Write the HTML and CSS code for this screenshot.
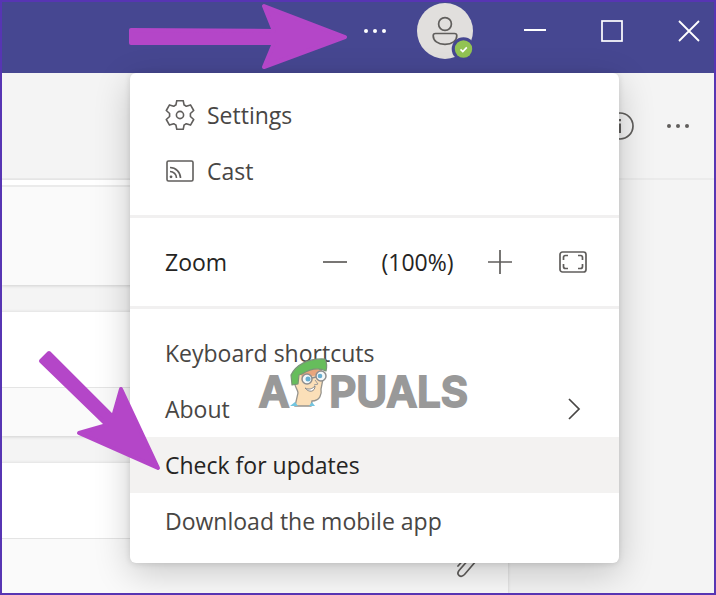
FILE: index.html
```
<!DOCTYPE html>
<html lang="en">

<head>
    <meta charset="UTF-8">
    <meta name="viewport" content="width=device-width, initial-scale=1.0">
    <title>Teams menu</title>
    <link rel="stylesheet" href="styles.css">
</head>

<body>

    <div class="app">

        <header class="titlebar">
            <button class="bar-btn" aria-label="Settings and more">
                <svg width="24" height="24" viewBox="0 0 24 24" fill="#fff">
                    <circle cx="3" cy="12" r="2" />
                    <circle cx="12" cy="12" r="2" />
                    <circle cx="21" cy="12" r="2" />
                </svg>
            </button>
            <button class="avatar" aria-label="Account">
                <svg width="60" height="60" viewBox="0 0 60 60" fill="none">
                    <circle cx="28" cy="28" r="28" fill="#e1dfdd" />
                    <g stroke="#605e5c" stroke-width="1.7">
                        <circle cx="28" cy="21" r="6.4" />
                        <path d="M18.500 30.500h19a2.300 2.300 0 0 1 2.300 2.300c0 5-4.500 8.500-11.800 8.500s-11.800-3.500-11.800-8.500a2.300 2.300 0 0 1 2.300-2.300z" />
                    </g>
                    <circle cx="46.500" cy="46" r="11.800" fill="#464791" />
                    <circle cx="46.500" cy="46" r="8.700" fill="#92c353" />
                    <path d="M43.500 46.300l2.300 2.200 4-4.200" stroke="#fff" stroke-width="1.700" />
                </svg>
            </button>
            <button class="bar-btn" aria-label="Minimize">
                <svg width="24" height="24" viewBox="0 0 24 24" stroke="#fff" stroke-width="2">
                    <path d="M1 11h22" />
                </svg>
            </button>
            <button class="bar-btn" aria-label="Maximize">
                <svg width="24" height="24" viewBox="0 0 24 24" stroke="#fff" stroke-width="1.7" fill="none">
                    <rect x="2" y="2" width="20" height="20" />
                </svg>
            </button>
            <button class="bar-btn" aria-label="Close">
                <svg width="24" height="24" viewBox="0 0 24 24" stroke="#fff" stroke-width="1.8">
                    <path d="M2 2l20 20M22 2L2 22" />
                </svg>
            </button>

            <nav class="menu">
                <div class="group">
                    <button class="item">
                        <svg class="icon" width="30" height="30" viewBox="0 0 30 30" fill="none" stroke="#605e5c" stroke-width="1.600" stroke-linejoin="round">
                            <path d="M11.800 .6h6.400l.9 4.400q1.100.4 2.200 1.300l4.200-1.400 3.200 5.600-3.300 3v3l3.300 3-3.200 5.600-4.200-1.400q-1.100.9-2.200 1.300l-.9 4.400h-6.400l-.9-4.400q-1.100-.4-2.200-1.300l-4.200 1.400-3.200-5.600 3.300-3v-3l-3.300-3 3.200-5.600 4.200 1.400q1.100-.9 2.200-1.300z" />
                            <circle cx="15" cy="15" r="3.600" />
                        </svg>
                        <span>Settings</span>
                    </button>
                    <button class="item">
                        <svg class="icon" width="30" height="30" viewBox="0 0 30 30" fill="none" stroke="#605e5c" stroke-width="1.600">
                            <rect x="2" y="5" width="26" height="20" rx="1.500" />
                            <path d="M5 11.500a10.500 10.500 0 0 1 10.500 10.500M5 15.500a6.500 6.500 0 0 1 6.500 6.500" />
                            <circle cx="6" cy="20.800" r="1.400" fill="#605e5c" stroke="none" />
                        </svg>
                        <span>Cast</span>
                    </button>
                </div>

                <div class="group zoom">
                    <span class="zoom-label">Zoom</span>
                    <button class="zoom-btn" aria-label="Zoom out">
                        <svg width="26" height="26" viewBox="0 0 26 26" stroke="#605e5c" stroke-width="1.700">
                            <path d="M1 13h24" />
                        </svg>
                    </button>
                    <span class="zoom-value">(100%)</span>
                    <button class="zoom-btn" aria-label="Zoom in">
                        <svg width="26" height="26" viewBox="0 0 26 26" stroke="#605e5c" stroke-width="1.700">
                            <path d="M1 13h24M13 1v24" />
                        </svg>
                    </button>
                    <button class="zoom-btn full" aria-label="Full screen">
                        <svg width="30" height="26" viewBox="0 0 30 26" fill="none" stroke="#605e5c" stroke-width="1.700">
                            <rect x="2" y="3" width="26" height="20" rx="2.500" />
                            <path d="M5.500 11v-2.500a2 2 0 0 1 2-2h2.500M20 6.500h2.500a2 2 0 0 1 2 2v2.500M24.500 15v2.500a2 2 0 0 1-2 2H20M10 19.500H7.500a2 2 0 0 1-2-2v-2.500" />
                        </svg>
                    </button>
                </div>

                <div class="group links">
                    <button class="item">Keyboard shortcuts</button>
                    <button class="item">
                        <span>About</span>
                        <svg class="chevron" width="14" height="24" viewBox="0 0 14 24" fill="none" stroke="#484644" stroke-width="1.700">
                            <path d="M2 2l10 10L2 22" />
                        </svg>
                    </button>
                    <button class="item active">Check for updates</button>
                    <button class="item">Download the mobile app</button>
                </div>
            </nav>
        </header>

        <div class="channel-bar">
            <button class="info" aria-label="Info">
                <svg width="28" height="28" viewBox="0 0 28 28" fill="none" stroke="#605e5c" stroke-width="1.700">
                    <circle cx="14" cy="14" r="13" />
                    <path d="M14 11.500v9.500M14 7v2.200" stroke-width="2" />
                </svg>
            </button>
            <button class="more" aria-label="More options">
                <svg width="24" height="24" viewBox="0 0 24 24" fill="#605e5c">
                    <circle cx="3" cy="12" r="2" />
                    <circle cx="12" cy="12" r="2" />
                    <circle cx="21" cy="12" r="2" />
                </svg>
            </button>
        </div>

        <main class="posts">
            <div class="post first">
                <div class="post-text"></div>
                <div class="reply"></div>
            </div>
            <div class="post">
                <div class="post-text"></div>
                <div class="reply"></div>
            </div>
            <div class="post last">
                <div class="post-text"></div>
                <div class="reply">
                    <svg width="26" height="30" viewBox="0 0 26 30" fill="none" stroke="#605e5c" stroke-width="1.700" stroke-linecap="round">
                        <path d="M2 15L12 4c5-5 12 0 8 6L8.500 23.500c-4 4-8.500 0-5.500-4L14 7" />
                    </svg>
                </div>
            </div>
        </main>

        <!-- watermark -->
        <div class="watermark">
            <span>A</span>
            <svg width="40" height="50" viewBox="0 0 40 50">
                <path d="M6 22c-2 7 3 10 3 14l-3 13h16l1-5c8 0 10-7 9-12l3-15-7-8-18 4z" fill="#fbdfb8" stroke="#96948e" stroke-width="1.300" />
                <path d="M12 17l12-7 9 4-1 4-9 1-9 5z" fill="#e9a57c" />
                <path d="M1 49l5-4 3 4zM20 49l3-4 3 4z" fill="#72c5e0" />
                <path d="M3 28L2 18C7 8 19 1 36 2c2 4 2 8 1 12-8-4-16-2-24 3l-3 1-1 9z" fill="#66bd5c" stroke="#789477" stroke-width="1.200" stroke-linejoin="round" />
                <circle cx="18" cy="22" r="5" fill="#f4f8f8" stroke="#8e8e8e" stroke-width="1.500" />
                <circle cx="32" cy="19" r="5" fill="#f4f8f8" stroke="#8e8e8e" stroke-width="1.500" />
                <path d="M23 21l4-1" stroke="#8e8e8e" stroke-width="1.500" />
                <circle cx="19" cy="22" r="2.500" fill="#68aed0" />
                <circle cx="31" cy="19" r="2.300" fill="#68aed0" />
                <path d="M26 23l3 4-4 1" fill="none" stroke="#999" stroke-width="1" />
                <path d="M16 31c4 2 7 1 10-2 0 6-6 7-10 2z" fill="#fff" stroke="#888" stroke-width="1" />
            </svg>
            <span>PUALS</span>
        </div>

        <!-- pointer arrows -->
        <svg class="arrow arrow-top" width="220" height="68" viewBox="0 0 220 68" fill="#b446c8" stroke="#b446c8" stroke-width="4" stroke-linejoin="round">
            <path d="M3 28l143 1L136 4l81 31-81 30 10-24H3z" />
        </svg>
        <svg class="arrow arrow-left" width="124" height="122" viewBox="0 0 124 122" fill="#b446c8" stroke="#b446c8" stroke-width="4" stroke-linejoin="round">
            <path d="M3 11l8-8 64 64 8-28 37 79-79-35 28-8z" />
        </svg>

    </div>

</body>

</html>
```

FILE: styles.css
```
* {
    box-sizing: border-box;
}

body {
    margin: 0;
    font-family: "Open Sans", "Noto Sans", sans-serif;
    font-size: 23px;
    color: #484644;
}

button {
    padding: 0;
    border: none;
    background: none;
    font: inherit;
    color: inherit;
    cursor: pointer;
}

svg {
    display: block;
    flex: none;
}

.app {
    position: relative;
    display: flex;
    flex-direction: column;
    min-height: 100vh;
    border: 2px solid #5735b3;
    background: #f4f4f4;
    overflow: hidden;
}

/* title bar */
.titlebar {
    position: relative;
    display: flex;
    justify-content: flex-end;
    align-items: flex-start;
    gap: 27px;
    height: 71px;
    background: #464791;
}

.bar-btn {
    display: flex;
    justify-content: center;
    align-items: center;
    width: 50px;
    height: 58px;
}

.avatar {
    width: 56px;
    height: 60px;
    margin: 1px 10px 0 -10px;
}

/* drop-down menu */
.menu {
    position: absolute;
    top: 100%;
    right: 95px;
    z-index: 5;
    width: 489px;
    background: #fff;
    border-radius: 6px;
    box-shadow: 0 10px 36px rgba(0, 0, 0, 0.2), 0 1px 6px rgba(0, 0, 0, 0.12);
}

.group {
    padding: 14px 0 16px;
}

.group + .group {
    border-top: 3px solid #f1f0f0;
}

.links {
    padding: 16px 0 14px;
}

.item {
    display: flex;
    align-items: center;
    width: 100%;
    height: 56px;
    padding: 0 35px;
    text-align: left;
}

.item.active {
    background: #f3f2f1;
    color: #252423;
}

.icon {
    margin-right: 12px;
}

.chevron {
    margin-left: auto;
    margin-right: 3px;
}

.zoom {
    display: flex;
    align-items: center;
    height: 91px;
    padding: 0 31px 0 35px;
    color: #252423;
}

.zoom-label {
    flex: 1;
}

.zoom-value {
    width: 139px;
    text-align: center;
}

.full {
    margin-left: 45px;
}

/* page behind the menu */
.channel-bar {
    display: flex;
    justify-content: flex-end;
    align-items: center;
    gap: 32px;
    height: 107px;
    padding-right: 24px;
    border-bottom: 2px solid #ebebeb;
}

.posts {
    display: flex;
    flex-direction: column;
    flex: 1;
    gap: 26px;
    width: 71%;
}

.post {
    border-top: 1px solid #e8e8e8;
    background: #fff;
    box-shadow: 0 1px 3px rgba(0, 0, 0, 0.15);
}

.post-text {
    height: 75px;
}

.reply {
    height: 49px;
    border-top: 1px solid #e4e4e4;
    background: #fafafa;
}

.first {
    border-top: none;
}

.first .post-text {
    height: 5px;
}

.first .reply {
    height: 100px;
    border-top: 2px solid #ebebeb;
}

.last {
    display: flex;
    flex-direction: column;
    flex: 1;
}

.last .reply {
    display: flex;
    flex: 1;
    justify-content: flex-end;
    align-items: center;
    min-height: 54px;
    padding-right: 26px;
}

/* overlays */
.watermark {
    position: absolute;
    top: 355px;
    right: 246px;
    z-index: 6;
    display: flex;
    align-items: flex-end;
    font-family: Inter, "Open Sans", sans-serif;
    font-size: 42px;
    font-weight: 600;
    line-height: 30px;
    color: #999;
    -webkit-text-stroke: 2px #999;
    pointer-events: none;
}

.arrow {
    position: absolute;
    z-index: 7;
    pointer-events: none;
}

.arrow-top {
    top: 0;
    right: 366px;
}

.arrow-left {
    top: 348px;
    right: 552px;
}
```
